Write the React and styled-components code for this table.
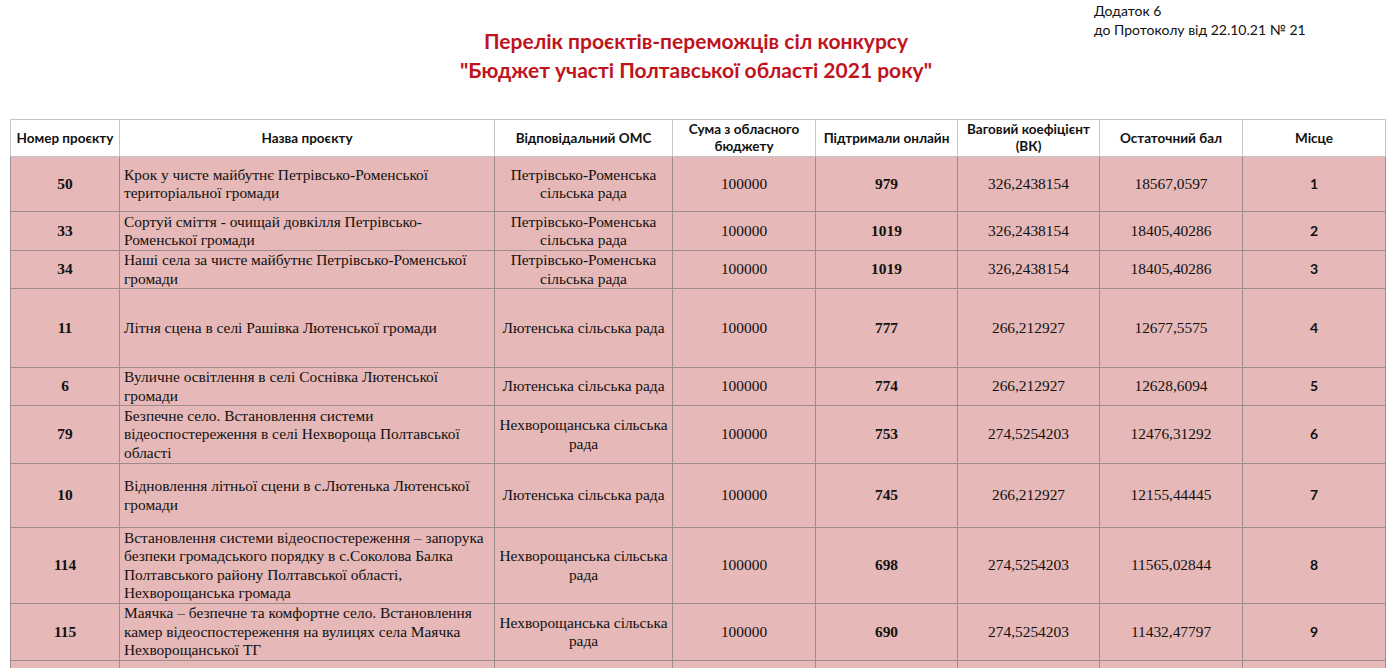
import React from 'react';
import styled, { createGlobalStyle } from 'styled-components';

const GlobalStyle = createGlobalStyle`
  body {
    margin: 0;
    background: #ffffff;
  }
`;

const rows = [
  { num: '50', name: 'Крок у чисте майбутнє Петрівсько-Роменської територіальної громади', oms: 'Петрівсько-Роменська сільська рада', votes: '979', coef: '326,2438154', score: '18567,0597', place: '1', h: 55 },
  { num: '33', name: 'Сортуй сміття - очищай довкілля Петрівсько-Роменської громади', oms: 'Петрівсько-Роменська сільська рада', votes: '1019', coef: '326,2438154', score: '18405,40286', place: '2', h: 39 },
  { num: '34', name: 'Наші села за чисте майбутнє Петрівсько-Роменської громади', oms: 'Петрівсько-Роменська сільська рада', votes: '1019', coef: '326,2438154', score: '18405,40286', place: '3', h: 38 },
  { num: '11', name: 'Літня сцена в селі Рашівка Лютенської громади', oms: 'Лютенська сільська рада', votes: '777', coef: '266,212927', score: '12677,5575', place: '4', h: 79 },
  { num: '6', name: 'Вуличне освітлення в селі Соснівка Лютенської громади', oms: 'Лютенська сільська рада', votes: '774', coef: '266,212927', score: '12628,6094', place: '5', h: 38 },
  { num: '79', name: 'Безпечне село. Встановлення системи відеоспостереження в селі Нехвороща Полтавської області', oms: 'Нехворощанська сільська рада', votes: '753', coef: '274,5254203', score: '12476,31292', place: '6', h: 58 },
  { num: '10', name: 'Відновлення літньої сцени в с.Лютенька Лютенської громади', oms: 'Лютенська сільська рада', votes: '745', coef: '266,212927', score: '12155,44445', place: '7', h: 64 },
  { num: '114', name: 'Встановлення системи відеоспостереження – запорука безпеки громадського порядку в с.Соколова Балка Полтавського району Полтавської області, Нехворощанська громада', oms: 'Нехворощанська сільська рада', votes: '698', coef: '274,5254203', score: '11565,02844', place: '8', h: 76 },
  { num: '115', name: 'Маячка – безпечне та комфортне село. Встановлення камер відеоспостереження на вулицях села Маячка Нехворощанської ТГ', oms: 'Нехворощанська сільська рада', votes: '690', coef: '274,5254203', score: '11432,47797', place: '9', h: 57 },
];

const widths = [109, 375, 178, 143, 142, 142, 143, 143];

const Page = styled.div`
  width: 1392px;
  height: 668px;
  overflow: hidden;
`;

const Header = styled.header`
  display: grid;
  grid-template-columns: 298px 1fr 298px;
  height: 119px;
`;

const Title = styled.h1`
  grid-column: 2;
  margin: 26px 0 0;
  text-align: center;
  font-family: Lato, "Noto Sans", sans-serif;
  font-weight: 700;
  font-size: 21px;
  line-height: 29px;
  color: #c0141c;
`;

const Note = styled.div`
  grid-column: 3;
  padding-top: 1px;
  font-family: Lato, "Noto Sans", sans-serif;
  font-size: 14px;
  line-height: 19px;
  color: #111;
`;

const Table = styled.table`
  margin-left: 10px;
  width: 1375px;
  table-layout: fixed;
  border-collapse: collapse;
`;

const HeadCell = styled.th`
  height: 36px;
  padding: 0 3px;
  border: 1px solid #c4c4c4;
  background: #ffffff;
  font-family: Lato, "Noto Sans", sans-serif;
  font-weight: 700;
  font-size: 13.5px;
  line-height: 17px;
  color: #111;
  text-align: center;
  vertical-align: middle;
`;

const Row = styled.tr`
  height: ${(p) => p.$h}px;
  background: #e6b8b7;
`;

const Cell = styled.td`
  padding: 0 4px;
  border: 1px solid #9e8c8c;
  font-family: "Liberation Serif", "Times New Roman", serif;
  font-size: 15.4px;
  line-height: 18.5px;
  color: #111;
  text-align: ${(p) => (p.$left ? 'left' : 'center')};
  font-weight: ${(p) => (p.$bold ? 700 : 400)};
  vertical-align: middle;
`;

const PlaceCell = styled(Cell)`
  font-family: Lato, "Noto Sans", sans-serif;
  font-weight: 700;
  font-size: 14px;
`;

export default function App() {
  return (
    <Page>
      <GlobalStyle />
      <Header>
        <Title>
          Перелік проєктів-переможців сіл конкурсу
          <br />
          "Бюджет участі Полтавської області 2021 року"
        </Title>
        <Note>
          Додаток 6
          <br />
          до Протоколу від 22.10.21 № 21
        </Note>
      </Header>
      <Table>
        <colgroup>
          {widths.map((w, i) => (
            <col key={i} style={{ width: w }} />
          ))}
        </colgroup>
        <thead>
          <tr>
            <HeadCell>Номер проєкту</HeadCell>
            <HeadCell>Назва проєкту</HeadCell>
            <HeadCell>Відповідальний ОМС</HeadCell>
            <HeadCell>Сума з обласного бюджету</HeadCell>
            <HeadCell>Підтримали онлайн</HeadCell>
            <HeadCell>Ваговий коефіцієнт (ВК)</HeadCell>
            <HeadCell>Остаточний бал</HeadCell>
            <HeadCell>Місце</HeadCell>
          </tr>
        </thead>
        <tbody>
          {rows.map((r) => (
            <Row key={r.num} $h={r.h}>
              <Cell $bold>{r.num}</Cell>
              <Cell $left>{r.name}</Cell>
              <Cell>{r.oms}</Cell>
              <Cell>100000</Cell>
              <Cell $bold>{r.votes}</Cell>
              <Cell>{r.coef}</Cell>
              <Cell>{r.score}</Cell>
              <PlaceCell>{r.place}</PlaceCell>
            </Row>
          ))}
          <Row $h={40}>
            {widths.map((w, i) => (
              <Cell key={i} />
            ))}
          </Row>
        </tbody>
      </Table>
    </Page>
  );
}
